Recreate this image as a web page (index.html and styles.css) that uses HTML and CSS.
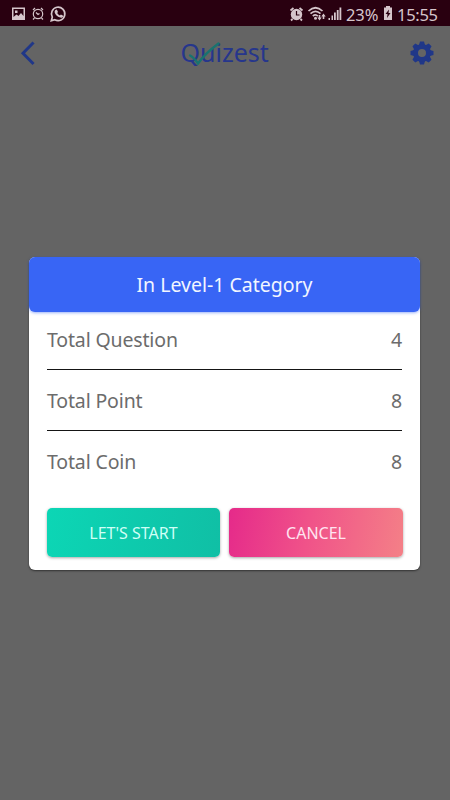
FILE: index.html
```
<!DOCTYPE html>
<html lang="en">
<head>
<meta charset="utf-8">
<title>Quizest</title>
<link rel="stylesheet" href="styles.css">
</head>
<body>
<div class="screen">
  <div class="status">
    <svg class="status-left" width="70" height="26" viewBox="0 0 70 26">
      <path fill="currentColor" fill-rule="evenodd" d="M12 7.500h13v12.500H12zM13.500 9v8l3-2.500 2 1.500 2.500-3 2.500 3V9zM15 10.500h2.500V13H15z"/>
      <g fill="none" stroke="currentColor" stroke-width="1.200"><circle cx="38" cy="14" r="4.700"/><path d="M36 12.500L38 14.500l1.500-1M33 10l2-2M41 8l2 2M34.500 18l-1.500 1.500M41.500 18l1.500 1.500"/></g>
      <path d="M51.300 20.700l1-3.500a6.700 6.700 0 1 1 2.500 2.500z" fill="none" stroke="currentColor" stroke-width="1.700"/>
      <path fill="currentColor" d="M55.500 10l1.300-.5 1.200 2.500-.8 1c.7 1.300 1.500 2 2.700 2.500l1-1 2.300 1.200c0 1.800-1.700 2.200-3 1.900-3-.8-5-3-5.500-5.100-.2-1 .1-1.900.8-2.500z"/>
    </svg>
    <div class="status-right">
      <svg width="54" height="26" viewBox="289 0 54 26">
        <circle cx="296.500" cy="14.500" r="5.700" fill="currentColor"/>
        <path d="M290.500 10.500l3-2.500M299.500 8l3 2.500M292.500 19l-1.500 1.500M300.500 19l1.500 1.500" stroke="currentColor" stroke-width="1.800"/>
        <path d="M296.500 11v4h3" fill="none" stroke="#290010" stroke-width="1.200"/>
        <g fill="none" stroke="currentColor" stroke-width="1.700"><path d="M308.500 11q7-6.500 14 0M310.500 13.700q5-4.500 10 0M312.800 16.200q2.700-2.500 5 0"/></g>
        <circle cx="315.500" cy="18.200" r="1.500" fill="currentColor"/>
        <path fill="currentColor" d="M318.700 15h1.600v2.500h1.400l-2.200 3-2.200-3h1.400zM322.700 19h1.600v-2.500h1.400l-2.200-3-2.200 3h1.400z"/>
        <path fill="currentColor" d="M328.500 18h1.500v2h-1.500zM331.500 15.500h1.500V20h-1.500zM334 12.500h1.800V20H334zM336.800 10h1.800v10h-1.800zM339.500 7.500h1.800V20h-1.800z"/>
      </svg>
      <span class="percent">23%</span>
      <svg class="battery" width="10" height="14" viewBox="0 0 10 14"><path fill="currentColor" fill-rule="evenodd" d="M3 0h4v1.500h2V14H1V1.500h2zM6 3.500L2.500 8h2L4 12l3.500-5h-2z"/></svg>
      <span class="clock">15:55</span>
    </div>
  </div>

  <div class="appbar">
    <svg width="24" height="30" viewBox="16 38 24 30"><path d="M32.500 43.500L23 53.300l9.500 9.700" fill="none" stroke="#203788" stroke-width="3" stroke-linecap="square"/></svg>
    <div class="logo"><span class="logo-text">Quizest</span>
      <svg class="tick" width="34" height="24" viewBox="187 41 34 24"><path d="M190 55.500q4 2 8 8 7-10 20.500-20" fill="none" stroke="#19736f" stroke-width="2.300" stroke-linecap="round"/></svg>
    </div>
    <svg width="26" height="26" viewBox="-13 -13 26 26">
      <g fill="#203788"><path d="M-2-11.500h4L3.300-7h-6.600zM-2 11.500h4L3.300 7h-6.600z"/><path transform="rotate(45)" d="M-2-11.500h4L3.300-7h-6.600zM-2 11.500h4L3.300 7h-6.600z"/><path transform="rotate(90)" d="M-2-11.500h4L3.300-7h-6.600zM-2 11.500h4L3.300 7h-6.600z"/><path transform="rotate(135)" d="M-2-11.500h4L3.300-7h-6.600zM-2 11.500h4L3.300 7h-6.600z"/></g>
      <circle r="6.500" fill="none" stroke="#203788" stroke-width="5"/>
    </svg>
  </div>

  <div class="dialog">
    <div class="title"><span>In Level-1 Category</span></div>
    <div class="rows">
      <div class="row"><span>Total Question</span><span>4</span></div>
      <div class="row"><span>Total Point</span><span>8</span></div>
      <div class="row"><span>Total Coin</span><span>8</span></div>
    </div>
    <div class="actions">
      <button class="button start">LET'S START</button>
      <button class="button cancel">CANCEL</button>
    </div>
  </div>
</div>
</body>
</html>
```
FILE: styles.css
```
* { box-sizing: border-box; }
body { margin: 0; font-family: "Noto Sans", sans-serif; }
.screen { width: 450px; height: 800px; background: #646464; overflow: hidden; }
.status { height: 26px; background: #290010; color: #d5c5cb; display: flex; justify-content: space-between; }
.status svg { display: block; }
.status-right { display: flex; align-items: center; width: 161px; font-size: 16.500px; line-height: 26px; white-space: nowrap; }
.percent { width: 37px; margin-left: 3px; padding-top: 3px; letter-spacing: -0.1px; }
.battery { margin-left: 0; }
.clock { margin-left: 4px; padding-top: 3px; letter-spacing: -0.3px; }
.appbar { height: 54px; padding: 0 15px 0 16px; display: flex; align-items: center; justify-content: space-between; }
.logo { position: relative; width: 88px; height: 40px; color: #26368c; font-size: 25px; line-height: 38px; white-space: nowrap; }
.tick { position: absolute; left: 6px; top: 8px; }
.dialog { width: 391px; height: 312.500px; margin: 177px 0 0 29px; background: #fff; border-radius: 6px; box-shadow: 0 1px 2px rgba(0, 0, 0, .5); }
.title { height: 55px; border-radius: 6px; background: #3865f5; box-shadow: 0 1px 3px rgba(56, 101, 245, .5); color: #f2f6ff; display: flex; align-items: center; justify-content: center; font-size: 19.500px; }
.rows { padding: 0 18px; color: #6c6c6c; font-size: 19.500px; letter-spacing: -0.15px; }
.row { height: 60.500px; display: flex; align-items: center; justify-content: space-between; border-bottom: 1.500px solid #151515; }
.row span { position: relative; }
.row:first-child { height: 58px; padding: 0 0 2px; }
.row:nth-child(2) { padding-top: 1px; }
.row:last-child { border: 0; padding-top: 1px; }
.actions { display: flex; gap: 9px; padding: 17px 17px 0 18px; }
.button { flex: 1; height: 49px; border: 0; border-radius: 5px; padding: 0; font: 16px "Noto Sans", sans-serif; box-shadow: 0 1px 3px rgba(0, 0, 0, .35); }
.start { background: linear-gradient(100deg, #0cd6b5, #10bfa5); color: #d0fff6; flex: 0 0 173px; }
.cancel { background: linear-gradient(100deg, #e52a8a, #f05289 45%, #f48087); color: #ffe4f0; }
```
